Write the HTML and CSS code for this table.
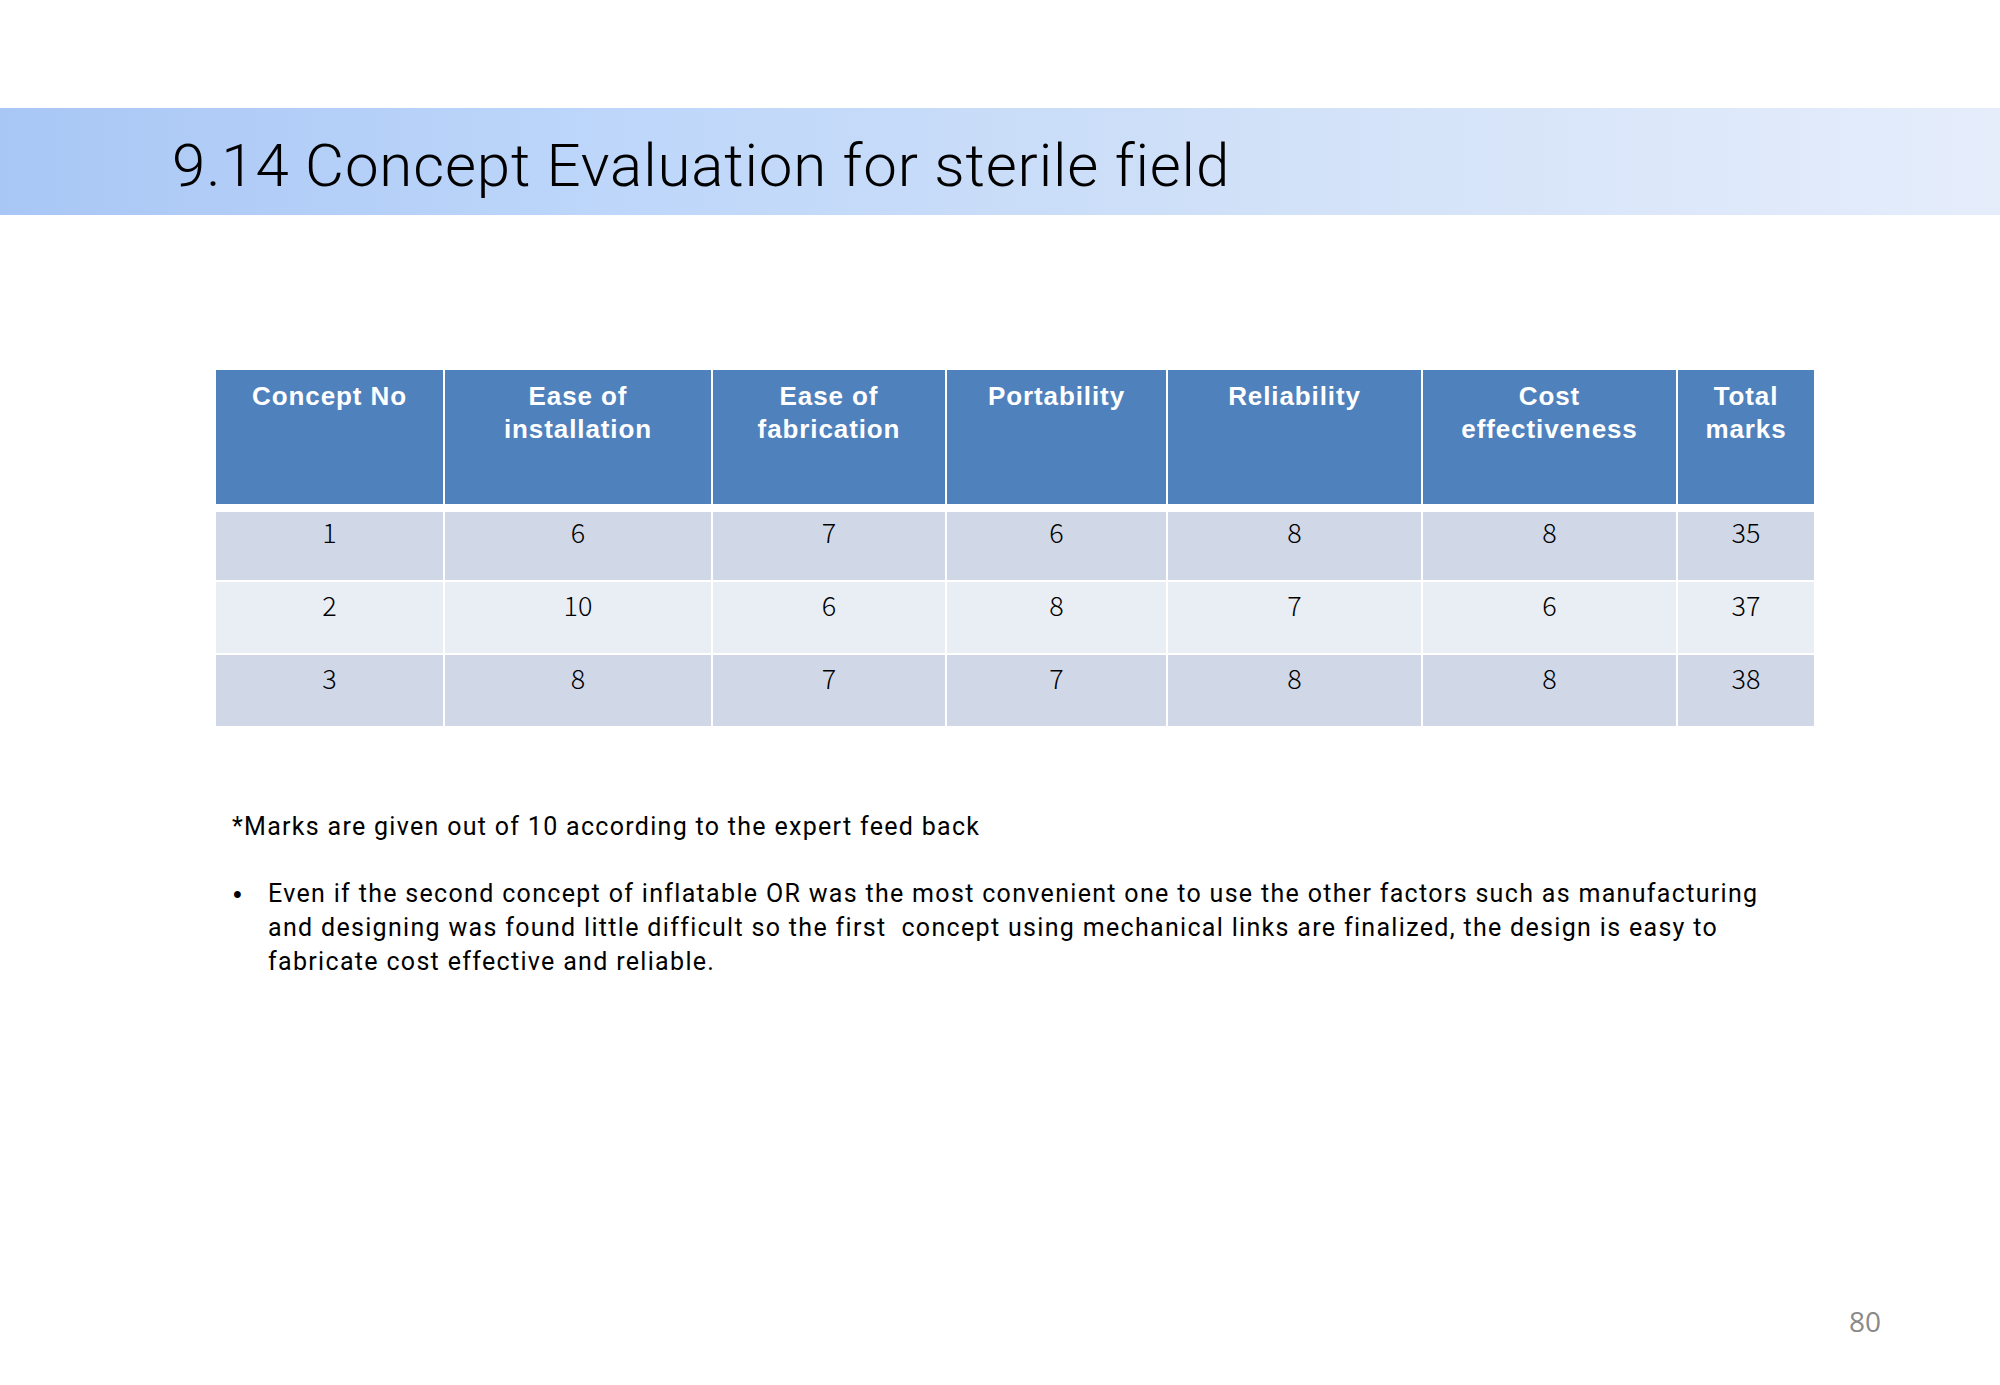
FILE: index.html
```html
<!DOCTYPE html>
<html lang="en">
<head>
<meta charset="utf-8">
<title>9.14 Concept Evaluation for sterile field</title>
<link rel="stylesheet" href="styles.css">
</head>
<body>
<div class="slide">
  <header class="banner">
    <h1 class="title">9.14 Concept Evaluation for sterile field</h1>
  </header>

  <div class="table">
    <div class="row head">
      <div class="cell">Concept No</div>
      <div class="cell">Ease of<br>installation</div>
      <div class="cell">Ease of<br>fabrication</div>
      <div class="cell">Portability</div>
      <div class="cell">Reliability</div>
      <div class="cell">Cost<br>effectiveness</div>
      <div class="cell">Total<br>marks</div>
    </div>
    <div class="body">
      <div class="row odd r1">
        <div class="cell">1</div><div class="cell">6</div><div class="cell">7</div><div class="cell">6</div><div class="cell">8</div><div class="cell">8</div><div class="cell">35</div>
      </div>
      <div class="row even">
        <div class="cell">2</div><div class="cell">10</div><div class="cell">6</div><div class="cell">8</div><div class="cell">7</div><div class="cell">6</div><div class="cell">37</div>
      </div>
      <div class="row odd">
        <div class="cell">3</div><div class="cell">8</div><div class="cell">7</div><div class="cell">7</div><div class="cell">8</div><div class="cell">8</div><div class="cell">38</div>
      </div>
    </div>
  </div>

  <p class="note">*Marks are given out of 10 according to the expert feed back</p>

  <ul class="bullets">
    <li><span class="dot">•</span><span class="btext">Even if the second concept of inflatable OR was the most convenient one to use the other factors such as manufacturing<br>and designing was found little difficult so the first&nbsp; concept using mechanical links are finalized, the design is easy to<br>fabricate cost effective and reliable.</span></li>
  </ul>

  <footer class="pageno">80</footer>
</div>
</body>
</html>
```

FILE: styles.css
```css
* { box-sizing: border-box; }

html, body {
  margin: 0;
  padding: 0;
  background: #ffffff;
}

.slide {
  width: 2000px;
  height: 1385px;
  padding-top: 108px;
  padding-bottom: 45px;
  display: flex;
  flex-direction: column;
  background: #ffffff;
  font-family: Roboto, "Liberation Sans", sans-serif;
  color: #000000;
}

.banner {
  height: 107px;
  padding-left: 172px;
  padding-top: 8px;
  background: linear-gradient(to right, #a9c7f5 0%, #bdd6fa 30%, #cfe0f8 60%, #dde8fa 85%, #e5edfb 100%);
}

.title {
  margin: 0;
  font-family: Roboto, "Liberation Sans", sans-serif;
  font-weight: 300;
  font-size: 60px;
  line-height: 99px;
  letter-spacing: 0.85px;
  color: #000000;
  white-space: nowrap;
}

.table {
  margin-top: 155px;
  margin-left: 216px;
  width: 1598px;
}

.row {
  display: grid;
  grid-template-columns: 227px 266px 232px 219px 253px 253px 136px;
  column-gap: 2px;
}

.head {
  height: 134px;
}

.head .cell {
  background: #4f81bd;
  color: #ffffff;
  text-align: center;
  font-family: "Liberation Sans", Arial, sans-serif;
  font-weight: 700;
  font-size: 26px;
  line-height: 33px;
  letter-spacing: 0.9px;
  padding-top: 10px;
}

.body {
  margin-top: 8px;
  display: flex;
  flex-direction: column;
  row-gap: 2px;
}

.body .row {
  height: 71px;
}

.body .r1 {
  height: 68px;
}

.body .cell {
  text-align: center;
  font-family: "Noto Sans CJK JP", "Noto Sans", sans-serif;
  font-weight: 300;
  font-size: 27px;
  line-height: 30px;
  padding-top: 8px;
  color: #000000;
}

.body .r1 .cell {
  padding-top: 5px;
}

.odd .cell { background: #d0d8e8; }
.even .cell { background: #e9edf4; }

.note {
  margin: 84px 0 0 232px;
  font-size: 25px;
  line-height: 34px;
  letter-spacing: 1.3px;
  white-space: nowrap;
}

.bullets {
  list-style: none;
  margin: 33px 0 0 233px;
  padding: 0;
}

.bullets li {
  display: flex;
  font-size: 25px;
  line-height: 34px;
  letter-spacing: 1.32px;
}

.dot {
  width: 35px;
  flex: none;
  font-family: "Liberation Sans", Arial, sans-serif;
}

.btext {
  white-space: nowrap;
}

.pageno {
  margin-top: auto;
  align-self: flex-end;
  margin-right: 119px;
  font-family: "Open Sans", "Noto Sans", sans-serif;
  font-size: 28px;
  line-height: 38px;
  color: #898989;
}
```
